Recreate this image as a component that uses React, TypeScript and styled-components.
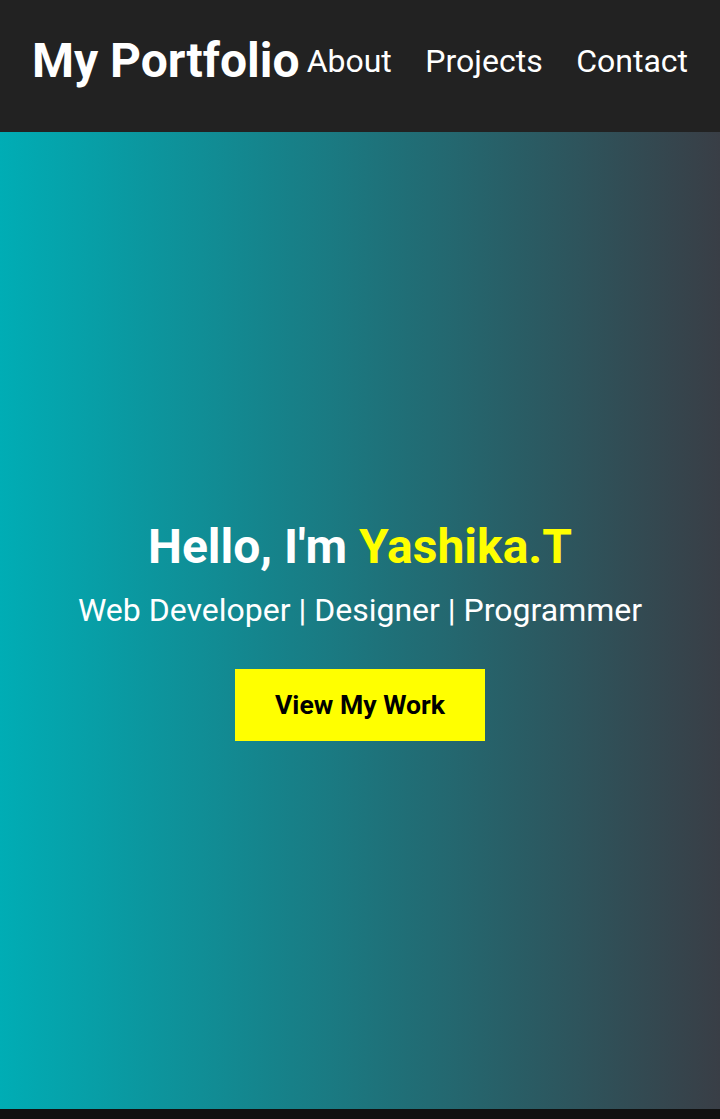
import React from "react";
import styled, { createGlobalStyle } from "styled-components";

const Global = createGlobalStyle`
  * { box-sizing: border-box; }
  body { margin: 0; font-family: Roboto, "Noto Sans", sans-serif; background: #111111; }
`;

const Header = styled.header`
  height: 132px;
  background: #222222;
  display: flex;
  align-items: center;
  justify-content: space-between;
  padding: 0 32px 11px;
  color: #ffffff;
`;

const Logo = styled.h1`
  margin: 0;
  font-size: 48px;
  font-weight: 700;
  white-space: nowrap;
`;

const Nav = styled.nav`
  display: flex;
  gap: 33.5px;
`;

const NavLink = styled.a`
  color: #ffffff;
  text-decoration: none;
  font-size: 32px;
`;

const Hero = styled.section`
  height: 977px;
  padding-top: 18px;
  background: linear-gradient(to right, #00adb5, #393e46);
  display: flex;
  flex-direction: column;
  align-items: center;
  justify-content: center;
  text-align: center;
  color: #ffffff;
`;

const Title = styled.h2`
  margin: 0;
  font-size: 48px;
  line-height: 56px;
  font-weight: 700;
`;

const Accent = styled.span`
  color: #ffff00;
`;

const Subtitle = styled.p`
  margin: 16px 0 40px;
  font-size: 32px;
  line-height: 38px;
`;

const Button = styled.a`
  display: inline-block;
  background: #ffff00;
  color: #000000;
  font-size: 26.6px;
  line-height: 32px;
  font-weight: 700;
  padding: 20px 40px;
  text-decoration: none;
`;

const Footer = styled.footer`
  height: 10px;
  background: #111111;
`;

export default function App() {
  return (
    <>
      <Global />
      <Header>
        <Logo>My Portfolio</Logo>
        <Nav>
          <NavLink href="#about">About</NavLink>
          <NavLink href="#projects">Projects</NavLink>
          <NavLink href="#contact">Contact</NavLink>
        </Nav>
      </Header>
      <Hero>
        <Title>
          Hello, I'm <Accent>Yashika.T</Accent>
        </Title>
        <Subtitle>Web Developer | Designer | Programmer</Subtitle>
        <Button href="#projects">View My Work</Button>
      </Hero>
      <Footer />
    </>
  );
}
